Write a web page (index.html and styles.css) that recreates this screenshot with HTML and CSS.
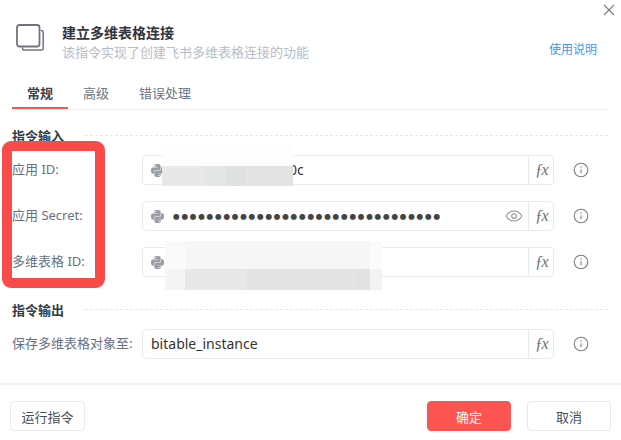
FILE: index.html
```html
<!doctype html>
<html lang="zh">

<head>
  <meta charset="utf-8">
  <title>建立多维表格连接</title>
  <link rel="stylesheet" href="styles.css">
</head>

<body>
  <svg class="sprite" aria-hidden="true">
    <symbol id="icon-python" viewBox="0 0 24 24">
      <path fill="currentColor" d="M14.25.18l.9.2.73.26.59.3.45.32.34.34.25.34.16.33.1.3.04.26.02.2-.01.13V8.5l-.05.63-.13.55-.21.46-.26.38-.3.31-.33.25-.35.19-.35.14-.33.1-.3.07-.26.04-.21.02H8.77l-.69.05-.59.14-.5.22-.41.27-.33.32-.27.35-.2.36-.15.37-.1.35-.07.32-.04.27-.02.21v3.06H3.17l-.21-.03-.28-.07-.32-.12-.35-.18-.36-.26-.36-.36-.35-.46-.32-.59-.28-.73-.21-.88-.14-1.05-.05-1.23.06-1.22.16-1.04.24-.87.32-.71.36-.57.4-.44.42-.33.42-.24.4-.16.36-.1.32-.05.24-.01h.16l.06.01h8.16v-.83H6.18l-.01-2.75-.02-.37.05-.34.11-.31.17-.28.25-.26.31-.23.38-.2.44-.18.51-.15.58-.12.64-.1.71-.06.77-.04.84-.02 1.27.05zm-6.3 1.98l-.23.33-.08.41.08.41.23.34.33.22.41.09.41-.09.33-.22.23-.34.08-.41-.08-.41-.23-.33-.33-.22-.41-.09-.41.09zm13.09 3.95l.28.06.32.12.35.18.36.27.36.35.35.47.32.59.28.73.21.88.14 1.04.05 1.23-.06 1.23-.16 1.04-.24.86-.32.71-.36.57-.4.45-.42.33-.42.24-.4.16-.36.09-.32.05-.24.02-.16-.01h-8.22v.82h5.84l.01 2.76.02.36-.05.34-.11.31-.17.29-.25.25-.31.24-.38.2-.44.17-.51.15-.58.13-.64.09-.71.07-.77.04-.84.01-1.27-.04-1.07-.14-.9-.2-.73-.25-.59-.3-.45-.33-.34-.34-.25-.34-.16-.33-.1-.3-.04-.25-.02-.2.01-.13v-5.34l.05-.64.13-.54.21-.46.26-.38.3-.32.33-.24.35-.2.35-.14.33-.1.3-.06.26-.04.21-.02.13-.01h5.84l.69-.05.59-.14.5-.21.41-.28.33-.32.27-.35.2-.36.15-.36.1-.35.07-.32.04-.28.02-.21V6.07h2.09l.14.01zm-6.47 14.25l-.23.33-.08.41.08.41.23.33.33.23.41.08.41-.08.33-.23.23-.33.08-.41-.08-.41-.23-.33-.33-.23-.41-.08-.41.08z"/>
    </symbol>
    <symbol id="icon-info" viewBox="0 0 16 16">
      <circle cx="8" cy="8" r="6.8" fill="none" stroke="currentColor" stroke-width="1.1"/>
      <path d="M8 7.2v4" fill="none" stroke="currentColor" stroke-width="1.1"/>
      <circle cx="8" cy="5" r=".7" fill="currentColor"/>
    </symbol>
  </svg>

  <div class="dialog">
    <svg class="close" viewBox="0 0 12 12" aria-label="关闭">
      <path d="M1 1l10 10M11 1L1 11" fill="none" stroke="#7a7a7a" stroke-width="1.1"/>
    </svg>

    <header class="head">
      <svg class="head-icon" viewBox="0 0 28 28">
        <path d="M24.6 6.5h1a1.6 1.6 0 0 1 1.6 1.6v16a2 2 0 0 1-2 2H8.400a1.800 1.800 0 0 1-1.800-1.800v-.8" fill="none" stroke="#6f7480" stroke-width="1.500"/>
        <rect x="1" y="1" width="22.500" height="21.500" rx="2.500" fill="none" stroke="#6f7480" stroke-width="1.800"/>
      </svg>
      <div class="head-text">
        <div class="title">建立多维表格连接</div>
        <div class="subtitle">该指令实现了创建飞书多维表格连接的功能</div>
      </div>
      <a class="help-link">使用说明</a>
    </header>

    <nav class="tabs">
      <span class="tab tab-active">常规</span>
      <span class="tab">高级</span>
      <span class="tab">错误处理</span>
    </nav>

    <div class="section-title section-input"><span>指令输入</span></div>

    <div class="rows">
      <div class="row">
        <label class="row-label">应用 ID:</label>
        <div class="field">
          <svg class="py"><use href="#icon-python"/></svg>
          <span class="value value-tail">0c</span>
          <span class="fx">ƒx</span>
        </div>
        <svg class="info"><use href="#icon-info"/></svg>
      </div>
      <div class="row">
        <label class="row-label">应用 Secret:</label>
        <div class="field">
          <svg class="py"><use href="#icon-python"/></svg>
          <span class="value dots">●●●●●●●●●●●●●●●●●●●●●●●●●●●●●●●●</span>
          <svg class="eye" viewBox="0 0 18 12">
            <path d="M1 6c2-3.300 4.800-5 8-5s6 1.700 8 5c-2 3.300-4.800 5-8 5S3 9.300 1 6z" fill="none" stroke="#8f9399" stroke-width="1.100"/>
            <circle cx="9" cy="6" r="2.300" fill="none" stroke="#8f9399" stroke-width="1.100"/>
          </svg>
          <span class="fx">ƒx</span>
        </div>
        <svg class="info"><use href="#icon-info"/></svg>
      </div>
      <div class="row">
        <label class="row-label">多维表格 ID:</label>
        <div class="field">
          <svg class="py"><use href="#icon-python"/></svg>
          <span class="value"></span>
          <span class="fx">ƒx</span>
        </div>
        <svg class="info"><use href="#icon-info"/></svg>
      </div>
    </div>

    <div class="section-title section-output"><span>指令输出</span></div>

    <div class="rows">
      <div class="row">
        <label class="row-label">保存多维表格对象至:</label>
        <div class="field">
          <span class="value value-plain">bitable_instance</span>
          <span class="fx">ƒx</span>
        </div>
        <svg class="info"><use href="#icon-info"/></svg>
      </div>
    </div>

    <footer class="foot">
      <button class="btn btn-run">运行指令</button>
      <button class="btn btn-primary">确定</button>
      <button class="btn">取消</button>
    </footer>

    <!-- blurred bits and the red marker lie on top of the form -->
    <div class="redact redact-app">
      <div class="redact-top"></div>
      <div class="redact-bottom"></div>
    </div>
    <div class="redact redact-table">
      <div class="redact-top"></div>
      <div class="redact-bottom"></div>
    </div>
    <div class="marker"></div>
  </div>
</body>

</html>
```

FILE: styles.css
```css
* {
  box-sizing: border-box;
}

body {
  margin: 0;
  background: #fff;
  font-family: "Noto Sans", "Noto Sans CJK SC", sans-serif;
  font-size: 13px;
  color: #333;
}

.sprite {
  display: none;
}

.dialog {
  position: relative;
  display: flex;
  flex-direction: column;
  width: 621px;
  height: 440px;
  overflow: hidden;
}

.close {
  position: absolute;
  top: 4px;
  right: 6px;
  width: 12px;
  height: 12px;
}

.head {
  display: flex;
  height: 62px;
  padding: 22px 24px 0 16px;
}

.head-icon {
  width: 28px;
  height: 28px;
  margin: 2px 18px 0 0;
}

.head-text {
  flex: 1;
}

.title {
  padding-top: 1px;
  font-size: 14px;
  font-weight: 700;
  line-height: 19px;
  color: #2f3440;
}

.subtitle {
  font-size: 13px;
  line-height: 20px;
  color: #b5bccb;
}

.help-link {
  margin-top: 18px;
  font-size: 12px;
  line-height: 20px;
  color: #3f95f5;
}

.tabs {
  display: flex;
  height: 32px;
  margin: 16px 13px 0 12px;
  border-bottom: 1px solid #eeeff5;
}

.tab {
  height: 31px;
  padding: 0 15px;
  line-height: 30px;
  color: #6d7484;
}

.tab-active {
  border-bottom: 2px solid #fb5451;
  font-weight: 700;
  color: #3a4150;
}

.section-title {
  display: flex;
  align-items: center;
  height: 20px;
  margin: 0 13px 0 12px;
  font-weight: 700;
  color: #333a46;
}

.section-title::after {
  content: "";
  flex: 1;
  margin-left: 21px;
  border-top: 1px dashed #e6e7ec;
}

.section-input {
  margin-top: 15px;
}

.section-output {
  margin-top: 22px;
}

.rows {
  display: flex;
  flex-direction: column;
  gap: 16px;
  margin: 10px 0 0 12px;
}

.row {
  display: flex;
  align-items: center;
  height: 30px;
}

.row-label {
  width: 130px;
  padding-bottom: 3px;
  color: #667085;
  white-space: nowrap;
}

.field {
  display: flex;
  align-items: center;
  width: 412px;
  height: 30px;
  border: 1px solid #e9e9f1;
  border-radius: 4px;
}

.py {
  width: 13px;
  height: 13px;
  margin: 0 9px 0 8px;
  color: #9a9ea6;
}

.value {
  flex: 1;
  padding-bottom: 2px;
  overflow: hidden;
  font-size: 14px;
  color: #333;
  white-space: nowrap;
}

.value-tail {
  padding-left: 116px;
}

.value-plain {
  padding-left: 8px;
}

.dots {
  padding-bottom: 0;
  font-size: 6.500px;
  letter-spacing: 1.900px;
  color: #444;
}

.eye {
  width: 18px;
  height: 12px;
  margin-right: 5px;
}

.fx {
  width: 25px;
  height: 28px;
  border-left: 1px solid #e9e9f1;
  font-family: "Liberation Serif", serif;
  font-size: 16px;
  font-style: italic;
  letter-spacing: -1.500px;
  line-height: 27px;
  text-align: center;
  color: #6e6e6e;
}

.info {
  width: 16px;
  height: 16px;
  margin-left: 19px;
  color: #7d7d7d;
}

.foot {
  display: flex;
  gap: 16px;
  margin-top: auto;
  padding: 16px 10px 9px;
  border-top: 2px solid #f2f2f5;
}

.btn {
  width: 84px;
  height: 30px;
  padding: 0;
  border: 1px solid #e9e9f1;
  border-radius: 4px;
  background: #fff;
  font: inherit;
  color: #4a4f5a;
}

.btn-run {
  width: 75px;
  margin-right: auto;
}

.btn-primary {
  border-color: #fb5451;
  background: #fb5451;
  color: #fff;
}

.redact {
  position: absolute;
  display: flex;
  flex-direction: column;
}

.redact-app {
  top: 143px;
  left: 162px;
  width: 131px;
  height: 44px;
}

.redact-app .redact-top {
  height: 23px;
  background: #fdfdfd;
}

.redact-app .redact-bottom {
  height: 20px;
  background: linear-gradient(90deg, #e8e8e8 43px, #e5e6e6 43px 64px, #dfe0e0 64px 84px, #e3e3e3 84px);
}

.redact-table {
  top: 241px;
  left: 165px;
  width: 217px;
  height: 49px;
}

.redact-table .redact-top {
  height: 28px;
  background: linear-gradient(90deg, #fafafa 20px, #f6f6f6 20px 205px, #fbfbfb 205px);
}

.redact-table .redact-bottom {
  height: 21px;
  background: linear-gradient(90deg, #f4f4f4 20px, #e8e8e8 20px 80px, #e4e4e4 80px 190px, #e2e2e2 190px 205px, #f2f2f2 205px);
}

.marker {
  position: absolute;
  top: 141px;
  left: 2px;
  width: 103px;
  height: 147px;
  border: 10px solid #f94c4a;
  border-radius: 9px;
}
```
